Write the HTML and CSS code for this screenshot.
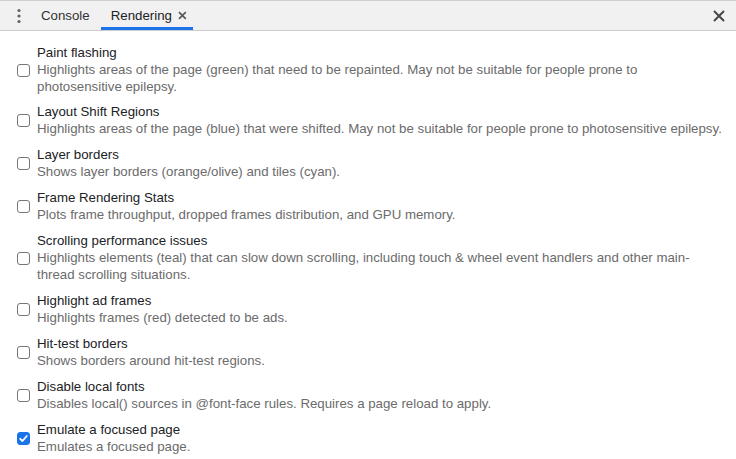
FILE: index.html
```html
<!DOCTYPE html>
<html>
<head>
<meta charset="utf-8">
<link rel="stylesheet" href="styles.css">
</head>
<body>
<div class="tabbar">
  <div class="menu">
    <svg width="4" height="16" viewBox="0 0 4 16"><circle cx="2" cy="2.5" r="1.6" fill="#5f6368"/><circle cx="2" cy="8" r="1.6" fill="#5f6368"/><circle cx="2" cy="13.5" r="1.6" fill="#5f6368"/></svg>
  </div>
  <div class="tab">Console</div>
  <div class="tab active">Rendering <svg class="tabx" width="9" height="9" viewBox="0 0 9 9"><path d="M1 1L8 8M8 1L1 8" stroke="#555555" stroke-width="1.6"/></svg></div>
  <div class="spacer"></div>
  <div class="close">
    <svg width="12" height="12" viewBox="0 0 12 12"><path d="M1 1L11 11M11 1L1 11" stroke="#474747" stroke-width="2"/></svg>
  </div>
</div>
<div class="list">
  <div class="item">
    <span class="cb"></span>
    <div class="text"><div class="title">Paint flashing</div><div class="desc">Highlights areas of the page (green) that need to be repainted. May not be suitable for people prone to photosensitive epilepsy.</div></div>
  </div>
  <div class="item">
    <span class="cb"></span>
    <div class="text"><div class="title">Layout Shift Regions</div><div class="desc">Highlights areas of the page (blue) that were shifted. May not be suitable for people prone to photosensitive epilepsy.</div></div>
  </div>
  <div class="item">
    <span class="cb"></span>
    <div class="text"><div class="title">Layer borders</div><div class="desc">Shows layer borders (orange/olive) and tiles (cyan).</div></div>
  </div>
  <div class="item">
    <span class="cb"></span>
    <div class="text"><div class="title">Frame Rendering Stats</div><div class="desc">Plots frame throughput, dropped frames distribution, and GPU memory.</div></div>
  </div>
  <div class="item">
    <span class="cb"></span>
    <div class="text"><div class="title">Scrolling performance issues</div><div class="desc">Highlights elements (teal) that can slow down scrolling, including touch &amp; wheel event handlers and other main-thread scrolling situations.</div></div>
  </div>
  <div class="item">
    <span class="cb"></span>
    <div class="text"><div class="title">Highlight ad frames</div><div class="desc">Highlights frames (red) detected to be ads.</div></div>
  </div>
  <div class="item">
    <span class="cb"></span>
    <div class="text"><div class="title">Hit-test borders</div><div class="desc">Shows borders around hit-test regions.</div></div>
  </div>
  <div class="item">
    <span class="cb"></span>
    <div class="text"><div class="title">Disable local fonts</div><div class="desc">Disables local() sources in @font-face rules. Requires a page reload to apply.</div></div>
  </div>
  <div class="item">
    <span class="cb checked"><svg width="13" height="13" viewBox="0 0 13 13"><path d="M3.2 6.8L5.5 9L9.8 4" fill="none" stroke="#fff" stroke-width="1.8" stroke-linecap="round" stroke-linejoin="round"/></svg></span>
    <div class="text"><div class="title">Emulate a focused page</div><div class="desc">Emulates a focused page.</div></div>
  </div>
</div>
</body>
</html>
```
FILE: styles.css
```css
html, body {
  margin: 0;
  padding: 0;
  background: #ffffff;
}
body {
  font-family: "Liberation Sans", Arial, sans-serif;
  font-size: 13.28px;
  width: 736px;
  height: 459px;
  overflow: hidden;
}
.tabbar {
  display: flex;
  align-items: stretch;
  height: 29px;
  background: #f1f1f1;
  border-top: 1px solid #d0d0d0;
  border-bottom: 1px solid #cbcbcb;
}
.menu {
  width: 37px;
  display: flex;
  align-items: center;
  justify-content: center;
  padding-right: 1px;
}
.tab {
  display: flex;
  align-items: center;
  padding: 0 10px 0 3px;
  color: #333333;
  box-sizing: border-box;
  border-bottom: 3px solid transparent;
  padding-top: 3px;
}
.tab.active {
  margin-left: 1px;
  padding: 3px 6px 0 10px;
  color: #202124;
  border-bottom-color: #1a73e8;
  width: 92px;
}
.tabx {
  margin-left: 6px;
  margin-top: -1px;
}
.spacer {
  flex: 1;
}
.close {
  width: 30px;
  display: flex;
  align-items: center;
  justify-content: center;
  padding-right: 2px;
}
.list {
  padding: 13px 0 0 0;
}
.item {
  display: flex;
  align-items: center;
  padding: 0 12px 0 17px;
  margin-bottom: 9px;
}
.item:first-child {
  margin-bottom: 8px;
}
.cb {
  flex: none;
  width: 13px;
  height: 13px;
  box-sizing: border-box;
  border: 1px solid #767676;
  border-radius: 3px;
  background: #fff;
  margin-right: 7px;
  margin-top: 1px;
  display: flex;
}
.cb.checked {
  background: #1a73e8;
  border-color: #1a73e8;
}
.cb.checked svg {
  margin: -1px;
}
.text {
  flex: 1;
  line-height: 17px;
}
.title {
  color: #202124;
}
.desc {
  color: #6b6b6b;
}
```
